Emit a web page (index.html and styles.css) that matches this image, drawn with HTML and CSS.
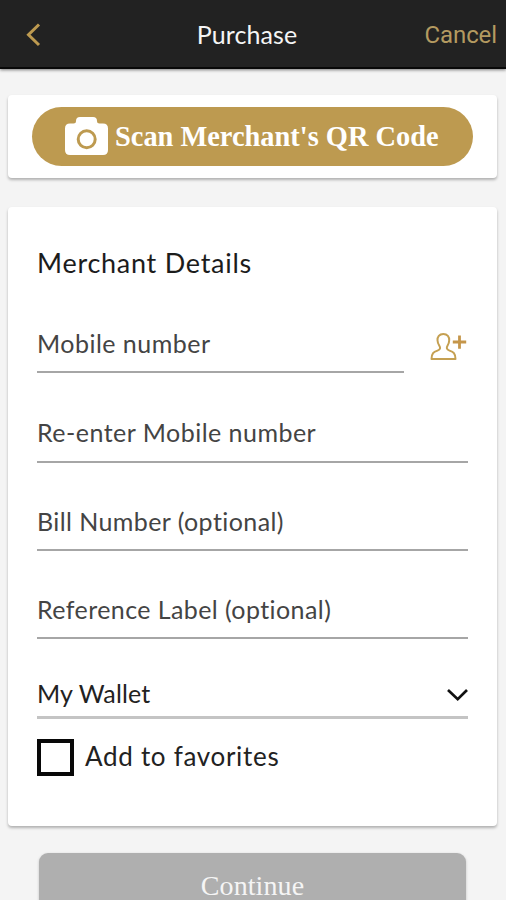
FILE: index.html
```html
<!DOCTYPE html>
<html lang="en">
<head>
<meta charset="utf-8">
<meta name="viewport" content="width=device-width, initial-scale=1">
<title>Purchase</title>
<link rel="stylesheet" href="styles.css">
</head>
<body>
<header class="topbar">
  <a class="back" aria-label="Back"><svg width="18" height="26" viewBox="0 0 18 26"><path d="M15 2.500L4.500 12.800L15 23" fill="none" stroke="#bd9a50" stroke-width="3"/></svg></a>
  <h1 class="title"><span>Purchase</span></h1>
  <a class="cancel"><span>Cancel</span></a>
</header>
<main class="content">
  <section class="card scan-card">
    <button class="scan">
      <svg class="camera" width="43" height="39" viewBox="0 0 43 39"><path d="M5 6.500H8.500Q11 6.500 11 4Q11 0 15 0H28Q32 0 32 4Q32 6.500 34.500 6.500H38Q43 6.500 43 11.500V33Q43 38 38 38H5Q0 38 0 33V11.500Q0 6.500 5 6.500Z" fill="#fff"/><circle cx="21.700" cy="22.300" r="8.500" fill="#fff" stroke="#bd9a50" stroke-width="3"/></svg>
      <span class="scan-label">Scan Merchant's QR Code</span>
    </button>
  </section>
  <section class="card details">
    <h2 class="heading"><span>Merchant Details</span></h2>
    <div class="mobile-row">
      <div class="field mobile"><span>Mobile number</span></div>
      <svg class="contact" width="38" height="30" viewBox="0 0 38 30"><path d="M13.300 2C9.200 2 7.300 5 7.500 8.300C7.600 10.500 8.200 12 9.200 13.500C10.700 15.800 10.500 17.500 7.500 18.600C3.500 20 1.700 21.400 1.500 27H25.500C25.300 21.400 23.500 20 19.500 18.600C16.500 17.500 16.200 15.800 17.600 13.500C18.500 12 19.200 10.500 19.200 8.300C19.400 5 17.400 2 13.300 2Z" fill="none" stroke="#c5a052" stroke-width="2" stroke-linejoin="round"/><path d="M22.800 10H36.200M29.500 3.500V16.700" stroke="#c5964a" stroke-width="2.800"/></svg>
    </div>
    <div class="field reenter"><span>Re-enter Mobile number</span></div>
    <div class="field bill"><span>Bill Number (optional)</span></div>
    <div class="field reference"><span>Reference Label (optional)</span></div>
    <div class="field wallet"><span>My Wallet</span><svg width="22" height="14" viewBox="0 0 22 14"><path d="M2 2L11.700 11.200L21 2" fill="none" stroke="#111" stroke-width="2.700"/></svg></div>
    <label class="favorite"><i class="box"></i><span>Add to favorites</span></label>
  </section>
  <button class="continue"><span>Continue</span></button>
</main>
</body>
</html>
```

FILE: styles.css
```css
* { box-sizing: border-box; }
body {
  margin: 0;
  height: 900px;
  overflow: hidden;
  background: #f4f4f4;
  font-family: Lato, "Liberation Sans", sans-serif;
  font-variant-ligatures: none;
  color: #222;
}
h1, h2 { margin: 0; font-weight: 400; }
button { border: 0; padding: 0; }
svg { display: block; flex: none; }
span { white-space: nowrap; }
.topbar {
  height: 69px;
  display: grid;
  grid-template-columns: 114px 1fr 126px;
  align-items: start;
  background: #222;
  border-bottom: 2px solid #080808;
  box-shadow: 0 1px 3px rgba(0, 0, 0, .5);
}
.back { padding: 22px 0 0 24px; }
.title {
  padding-top: 19px;
  text-align: center;
  font-size: 25px;
  line-height: 30px;
  letter-spacing: .1px;
  color: #f5f5f5;
}
.cancel {
  padding: 20px 9px 0 0;
  text-align: right;
  font: 24px/30px Roboto, sans-serif;
  letter-spacing: -.1px;
  color: #b49a60;
}
.content { padding: 26px 9px 0 8px; }
.card {
  background: #fff;
  border-radius: 4px;
  box-shadow: 0 2px 3px rgba(0, 0, 0, .28);
}
.scan-card { height: 83px; padding: 12px 24px; }
.scan {
  width: 441px;
  height: 59px;
  display: flex;
  align-items: center;
  padding-left: 33px;
  gap: 7px;
  border-radius: 30px;
  background: #bd9a50;
  color: #fff;
}
.scan-label { font: bold 28.4px/34px "Liberation Serif", serif; }
.details { height: 619px; margin-top: 29px; padding: 40px 29px 0; }
.heading { font-size: 27px; line-height: 32px; letter-spacing: .74px; color: #1c1c1c; }
.mobile-row { display: flex; justify-content: space-between; margin-top: 49px; }
.contact { margin-top: 4px; }
.field {
  height: 45px;
  font-size: 25px;
  line-height: 30px;
  letter-spacing: .48px;
  color: #444;
  border-bottom: 2px solid #a6a6a6;
}
.mobile { width: 367px; }
.reenter { margin-top: 44px; height: 46px; }
.bill { margin-top: 43px; }
.reference { margin-top: 43px; }
.bill, .reference { letter-spacing: .42px; }
.wallet {
  height: 41px;
  margin-top: 39px;
  display: flex;
  justify-content: space-between;
  letter-spacing: .15px;
  color: #222;
  border-bottom: 3px solid #c4c4c4;
}
.wallet svg { margin-top: 10px; }
.favorite {
  display: flex;
  align-items: flex-start;
  gap: 11px;
  margin-top: 20px;
  font-size: 26px;
  line-height: 34px;
  letter-spacing: .7px;
  color: #222;
}
.box { width: 37px; height: 37px; border: 4px solid #080808; }
.continue {
  display: block;
  width: 427px;
  height: 66px;
  margin: 27px 0 0 31px;
  border-radius: 9px;
  background: #afafaf;
  box-shadow: 0 1px 3px rgba(0, 0, 0, .2);
  color: #f5f5f5;
  font: 28px/32px "Liberation Serif", serif;
  letter-spacing: .1px;
}
```
